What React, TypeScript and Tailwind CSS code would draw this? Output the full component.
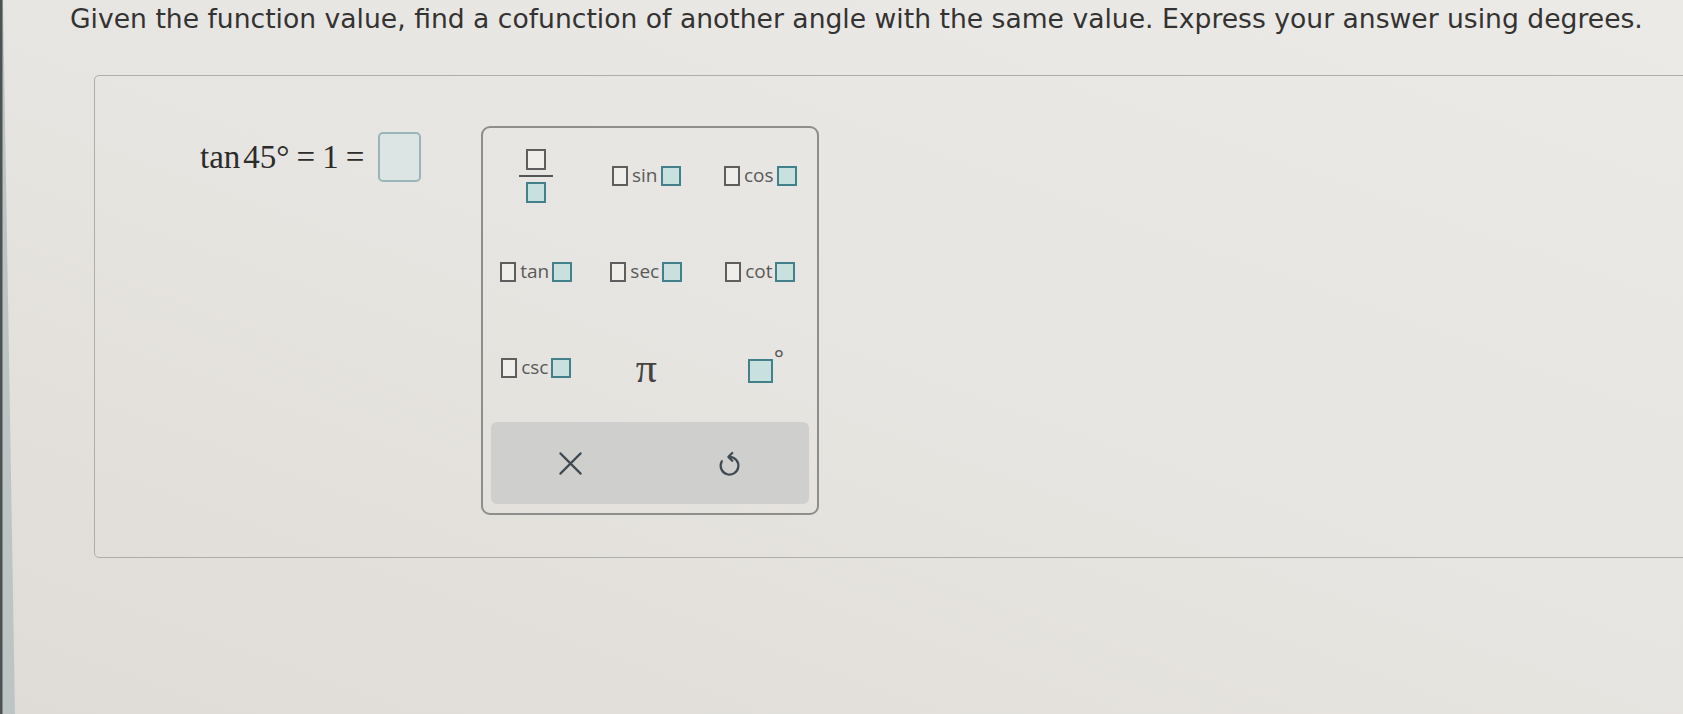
import React from 'react';

const serif = "font-['Liberation_Serif','Times_New_Roman',serif]";

const Slot = ({ teal = false, className = '' }: { teal?: boolean; className?: string }) => (
  <span
    className={`block border-2 ${teal ? 'border-[#42818b] bg-[#c8e1df]' : 'border-[#5e5e5e] bg-[#efeeea]'} ${className}`}
  />
);

const FnKey = ({ name }: { name: string }) => (
  <div className="flex items-center">
    <Slot className="w-[16px] h-[20px]" />
    <span className="ml-[4px] mr-[3px] text-[19px] leading-none text-[#5a5a5a] font-['Open_Sans',sans-serif] -translate-y-[1px]">
      {name}
    </span>
    <Slot teal className="w-[20px] h-[20px]" />
  </div>
);

const FractionKey = () => (
  <div className="flex flex-col items-center">
    <Slot className="w-[20px] h-[21px]" />
    <span className="block w-[34px] h-[2px] bg-[#555] my-[5px]" />
    <Slot teal className="w-[20px] h-[21px]" />
  </div>
);

const Cell = ({ children }: { children: React.ReactNode }) => (
  <div className="flex items-center justify-center">{children}</div>
);

export default function App() {
  return (
    <div className="flex h-[714px] w-full overflow-hidden bg-[linear-gradient(20deg,#dfdcd7,#e7e5e1_50%,#eceae6)]">
      {/* edge of the monitor in the photo */}
      <div className="w-[15px] shrink-0 bg-[linear-gradient(90deg,#4d5253_0,#4d5253_2px,#bcc5c4_3px)] [clip-path:polygon(0_0,3px_0,100%_100%,0_100%)]" />

      <div className="flex-1 min-w-0">
        <p className="pl-[55px] pt-[3px] text-[26.6px] leading-[32px] text-[#333] font-['DejaVu_Sans',sans-serif] whitespace-nowrap">
          Given the function value, find a cofunction of another angle with the same value. Express your answer using degrees.
        </p>

        <div className="ml-[79px] mt-[40px] w-[1640px] h-[483px] border border-[#aeadaa] rounded-[5px] flex items-start pl-[105px] pt-[50px]">
          {/* equation */}
          <div className="flex items-center gap-[14px] h-[50px] mt-[6px]">
            <span className={`${serif} text-[33px] leading-none text-[#2c2c2c] whitespace-nowrap`}>
              tan<span className="ml-[3px]">45°</span>
              <span className="mx-[7px]">=</span>1<span className="ml-[7px]">=</span>
            </span>
            <span className="block w-[43px] h-[50px] rounded-[5px] border-2 border-[#9ab5b8] bg-[#dce5e3]" />
          </div>

          {/* keypad */}
          <div className="ml-[60px] w-[338px] h-[389px] border-2 border-[#8e8e8c] rounded-[9px] px-[8px] pb-[9px] flex flex-col">
            <div className="grid grid-cols-[90px_130px_98px] grid-rows-[96px_96px_96px]">
              <Cell>
                <FractionKey />
              </Cell>
              <Cell>
                <FnKey name="sin" />
              </Cell>
              <Cell>
                <FnKey name="cos" />
              </Cell>
              <Cell>
                <FnKey name="tan" />
              </Cell>
              <Cell>
                <FnKey name="sec" />
              </Cell>
              <Cell>
                <FnKey name="cot" />
              </Cell>
              <Cell>
                <FnKey name="csc" />
              </Cell>
              <Cell>
                <span className={`${serif} text-[42px] leading-none text-[#444]`}>π</span>
              </Cell>
              <Cell>
                <div className="relative">
                  <Slot teal className="w-[25px] h-[24px] mt-[6px]" />
                  <span className="absolute left-[26px] -top-[7px] text-[24px] leading-none text-[#555] font-['Open_Sans',sans-serif]">
                    °
                  </span>
                </div>
              </Cell>
            </div>

            <div className="mt-[6px] h-[82px] rounded-[6px] bg-[#cfcfcd] grid grid-cols-2">
              <div className="flex items-center justify-center">
                <svg width="27" height="27" viewBox="0 0 24 24" fill="none" stroke="#3f4a52" strokeWidth="1.9" strokeLinecap="round">
                  <path d="M3 3L21 21M21 3L3 21" />
                </svg>
              </div>
              <div className="flex items-center justify-center">
                <svg width="27" height="31" viewBox="0 0 24 28" fill="none" stroke="#3f4a52" strokeWidth="2" strokeLinecap="round" strokeLinejoin="round">
                  <path d="M12 8A8 8 0 1 1 5.1 12" />
                  <path d="M14.5 4.5L11 8L14.5 11.5" />
                </svg>
              </div>
            </div>
          </div>
        </div>
      </div>
    </div>
  );
}
